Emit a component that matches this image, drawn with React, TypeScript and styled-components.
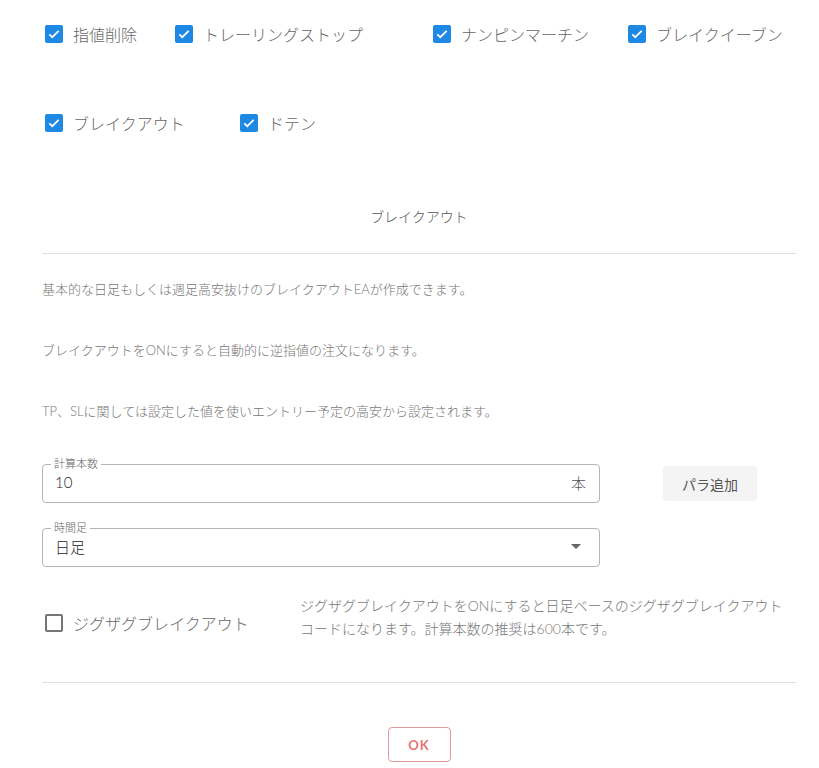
import React, { useState } from "react";
import styled, { createGlobalStyle } from "styled-components";

const GlobalStyle = createGlobalStyle`
  body {
    margin: 0;
    background: #fff;
    font-family: "Lato", "Noto Sans CJK JP", sans-serif;
  }
`;

const Page = styled.main`
  width: 754px;
  padding: 13px 0 40px 42px;
`;

const CheckRow = styled.div<{ $gap?: number }>`
  display: flex;
  align-items: center;
  margin-top: ${(p) => p.$gap ?? 0}px;
`;

const CheckLabel = styled.label<{ $width?: number }>`
  display: flex;
  align-items: center;
  gap: 10px;
  height: 42px;
  padding-left: 3px;
  width: ${(p) => (p.$width ? `${p.$width - 3}px` : "auto")};
  font-size: 16px;
  font-weight: 300;
  color: #666;
  cursor: pointer;
  user-select: none;
`;

const Box = styled.span<{ $on: boolean }>`
  display: inline-flex;
  align-items: center;
  justify-content: center;
  width: 18px;
  height: 18px;
  box-sizing: border-box;
  border-radius: 2px;
  background: ${(p) => (p.$on ? "#1e88e5" : "transparent")};
  border: ${(p) => (p.$on ? "none" : "2px solid #757575")};
  flex-shrink: 0;
`;

const Title = styled.h2`
  margin: 63px 0 0;
  text-align: center;
  font-size: 14px;
  line-height: 20px;
  font-weight: 300;
  color: #555;
`;

const Divider = styled.hr<{ $top: number }>`
  margin: ${(p) => p.$top}px 0 0;
  border: none;
  border-top: 1px solid #e0e0e0;
`;

const Notes = styled.div`
  display: flex;
  flex-direction: column;
  gap: 41px;
  margin-top: 25px;
`;

const Note = styled.p`
  margin: 0;
  font-size: 13px;
  line-height: 20px;
  font-weight: 300;
  color: #777;
`;

const FieldArea = styled.div`
  display: flex;
  align-items: flex-start;
  gap: 63px;
  margin-top: 37px;
`;

const FieldColumn = styled.div`
  display: flex;
  flex-direction: column;
  gap: 19px;
  width: 558px;
`;

const Outline = styled.fieldset`
  margin: 0;
  padding: 0 12px 8px;
  border: 1px solid #b5b5b5;
  border-radius: 4px;
  min-width: 0;
`;

const Legend = styled.legend`
  padding: 0 3px;
  margin-left: -4px;
  font-size: 11px;
  line-height: 12px;
  font-weight: 300;
  color: #666;
`;

const ValueRow = styled.div`
  display: flex;
  align-items: center;
  justify-content: space-between;
  height: 24px;
  font-size: 15px;
  font-weight: 300;
  color: #222;
`;

const Unit = styled.span`
  font-size: 15px;
  color: #555;
  margin-right: 1px;
`;

const Arrow = styled.span`
  width: 0;
  height: 0;
  margin-right: 6px;
  border-left: 5px solid transparent;
  border-right: 5px solid transparent;
  border-top: 5px solid #666;
`;

const GreyButton = styled.button`
  margin-top: 8px;
  width: 94px;
  height: 35px;
  border: none;
  border-radius: 4px;
  background: #f4f4f4;
  color: #555;
  font-family: inherit;
  font-size: 14px;
  cursor: pointer;
`;

const ZigzagRow = styled.div`
  display: flex;
  align-items: flex-start;
  margin-top: 27px;
`;

const ZigzagLabel = styled(CheckLabel)`
  margin-top: 8px;
`;

const Description = styled.p`
  margin: 0;
  width: 496px;
  font-size: 14px;
  line-height: 23px;
  font-weight: 300;
  color: #777;
`;

const Footer = styled.div`
  display: flex;
  justify-content: center;
  margin-top: 44px;
`;

const OkButton = styled.button`
  width: 63px;
  height: 35px;
  background: #fff;
  border: 1px solid #e09a9a;
  border-radius: 4px;
  color: #e57373;
  font-family: "Lato", sans-serif;
  font-size: 13px;
  font-weight: 700;
  letter-spacing: 1px;
  cursor: pointer;
`;

const Check = ({
  label,
  width,
  initial = true,
  as,
}: {
  label: string;
  width?: number;
  initial?: boolean;
  as?: typeof CheckLabel;
}) => {
  const [on, setOn] = useState(initial);
  const Label = as ?? CheckLabel;
  return (
    <Label $width={width} onClick={() => setOn(!on)}>
      <Box $on={on}>
        {on && (
          <svg width="14" height="14" viewBox="0 0 24 24">
            <path
              d="M4 12.5l5 5L20 6.5"
              fill="none"
              stroke="#fff"
              strokeWidth="3"
            />
          </svg>
        )}
      </Box>
      {label}
    </Label>
  );
};

const App = () => {
  return (
    <>
      <GlobalStyle />
      <Page>
        <CheckRow>
          <Check label="指値削除" width={130} />
          <Check label="トレーリングストップ" width={258} />
          <Check label="ナンピンマーチン" width={195} />
          <Check label="ブレイクイーブン" />
        </CheckRow>
        <CheckRow $gap={47}>
          <Check label="ブレイクアウト" width={195} />
          <Check label="ドテン" />
        </CheckRow>

        <Title>ブレイクアウト</Title>
        <Divider $top={26} />

        <Notes>
          <Note>基本的な日足もしくは週足高安抜けのブレイクアウトEAが作成できます。</Note>
          <Note>ブレイクアウトをONにすると自動的に逆指値の注文になります。</Note>
          <Note>TP、SLに関しては設定した値を使いエントリー予定の高安から設定されます。</Note>
        </Notes>

        <FieldArea>
          <FieldColumn>
            <Outline>
              <Legend>計算本数</Legend>
              <ValueRow>
                <span>10</span>
                <Unit>本</Unit>
              </ValueRow>
            </Outline>
            <Outline>
              <Legend>時間足</Legend>
              <ValueRow>
                <span>日足</span>
                <Arrow />
              </ValueRow>
            </Outline>
          </FieldColumn>
          <GreyButton>パラ追加</GreyButton>
        </FieldArea>

        <ZigzagRow>
          <Check label="ジグザグブレイクアウト" width={258} initial={false} as={ZigzagLabel} />
          <Description>
            ジグザグブレイクアウトをONにすると日足ベースのジグザグブレイクアウトコードになります。計算本数の推奨は600本です。
          </Description>
        </ZigzagRow>

        <Divider $top={38} />

        <Footer>
          <OkButton>OK</OkButton>
        </Footer>
      </Page>
    </>
  );
};

export default App;
